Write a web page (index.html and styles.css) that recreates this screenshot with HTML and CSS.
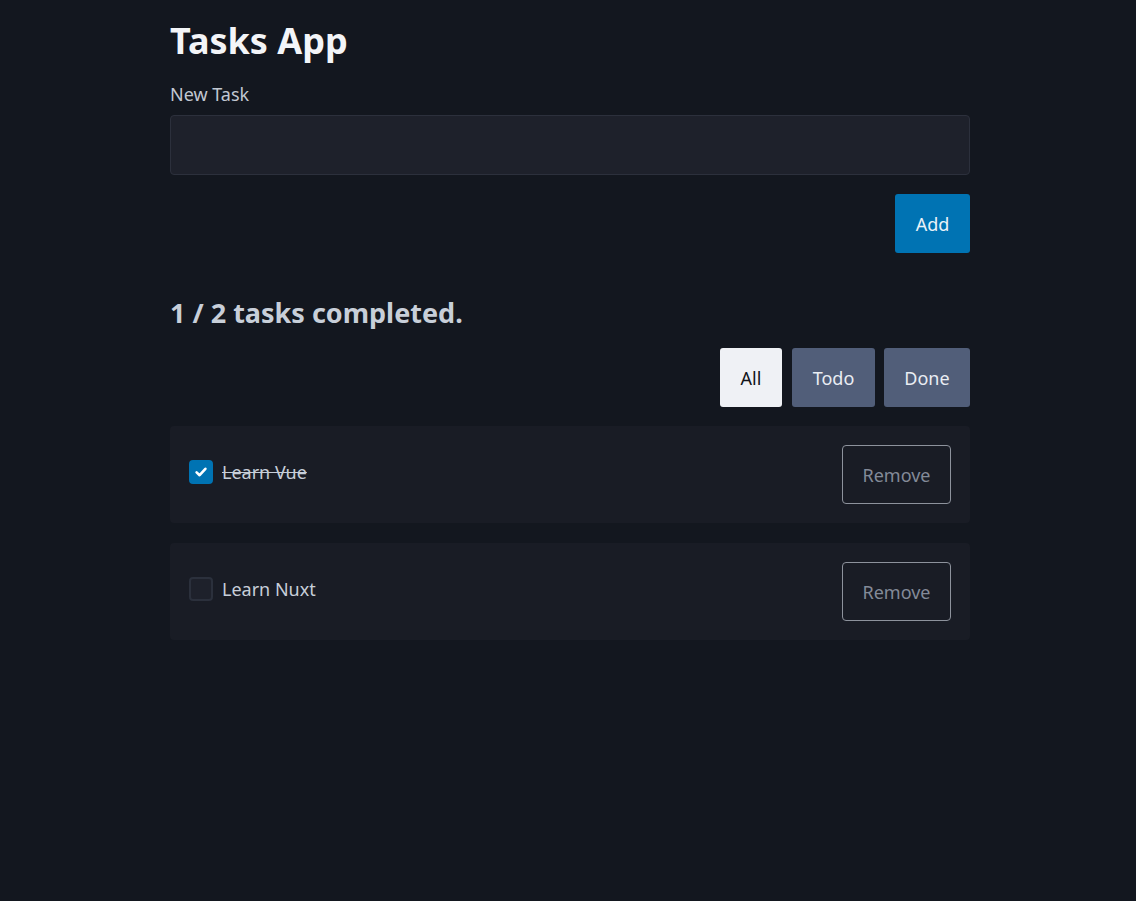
FILE: index.html
```html
<!DOCTYPE html>
<html lang="en">
<head>
<meta charset="utf-8">
<title>Tasks App</title>
<link rel="stylesheet" href="styles.css">
</head>
<body>
<main class="container">
  <h1 class="title">Tasks App</h1>
  <form class="new-task">
    <label class="label" for="task">New Task</label>
    <input class="input" id="task" type="text">
    <div class="actions">
      <button type="button" class="btn btn-primary">Add</button>
    </div>
  </form>
  <h2 class="summary">1 / 2 tasks completed.</h2>
  <div class="filters">
    <button type="button" class="btn btn-light">All</button>
    <button type="button" class="btn btn-muted">Todo</button>
    <button type="button" class="btn btn-muted">Done</button>
  </div>
  <ul class="tasks">
    <li class="task">
      <label class="task-label">
        <span class="check checked">
          <svg width="16" height="16" viewBox="0 0 16 16"><path d="M3.6 8.4 L6.6 11.2 L12.4 4.8" fill="none" stroke="#fff" stroke-width="2.6" stroke-linecap="round" stroke-linejoin="round"/></svg>
        </span>
        <span class="task-text done">Learn Vue</span>
      </label>
      <button type="button" class="btn btn-outline">Remove</button>
    </li>
    <li class="task">
      <label class="task-label">
        <span class="check"></span>
        <span class="task-text">Learn Nuxt</span>
      </label>
      <button type="button" class="btn btn-outline">Remove</button>
    </li>
  </ul>
</main>
</body>
</html>
```
FILE: styles.css
```css
* { box-sizing: border-box; }
html, body { margin: 0; padding: 0; }
body {
  background: #13171f;
  color: #d8dee9;
  font-family: "Noto Sans", "Open Sans", sans-serif;
  padding-left: 4px;
}
.container {
  width: 800px;
  margin: 0 auto;
  padding-top: 14px;
}
.title {
  margin: 0;
  font-size: 36px;
  line-height: 54px;
  font-weight: 700;
  color: #f3f5f8;
}
.new-task {
  display: flex;
  flex-direction: column;
  margin-top: 14px;
}
.label {
  font-size: 18px;
  line-height: 24px;
  color: #c2c8d2;
  margin-bottom: 9px;
}
.input {
  height: 60px;
  background: #1e212b;
  border: 1px solid #2c303c;
  border-radius: 4px;
  color: #e5e9f0;
  font: inherit;
  padding: 0 16px;
}
.actions {
  display: flex;
  justify-content: flex-end;
  margin-top: 19px;
}
.btn {
  font-family: inherit;
  font-size: 18px;
  height: 59px;
  padding: 0 20px;
  border: none;
  border-radius: 3px;
  cursor: pointer;
}
.btn-primary { background: #0073b3; color: #eaf2f8; width: 75px; }
.summary {
  margin: 42px 0 0;
  font-size: 27px;
  line-height: 36px;
  font-weight: 700;
  color: #c8cfd9;
}
.filters {
  display: flex;
  justify-content: flex-end;
  gap: 9px;
  margin-top: 17px;
}
.btn-light { background: #eff1f5; color: #11141a; width: 62px; padding: 0; }
.btn-muted { background: #515e79; color: #e9edf3; padding: 0; }
.filters .btn-muted:nth-child(2) { width: 83px; margin-left: 1px; }
.filters .btn-muted:nth-child(3) { width: 86px; }
.tasks {
  list-style: none;
  margin: 19px 0 0;
  padding: 0;
  display: flex;
  flex-direction: column;
  gap: 20px;
}
.task {
  background: #191c25;
  border-radius: 4px;
  height: 97px;
  padding: 0 19px;
  display: flex;
  align-items: center;
  justify-content: space-between;
}
.task-label {
  display: flex;
  align-items: center;
  gap: 9px;
  margin-top: -5px;
}
.check {
  width: 24px;
  height: 24px;
  border-radius: 4px;
  border: 2px solid #2b303c;
  background: #1e212b;
  display: flex;
  align-items: center;
  justify-content: center;
}
.check.checked { background: #0073b3; border-color: #0073b3; }
.task-text {
  font-size: 18px;
  color: #c7ced9;
}
.task-text.done { text-decoration: line-through; }
.btn-outline {
  background: transparent;
  border: 1px solid #8d929c;
  border-radius: 4px;
  color: #838a98;
  width: 109px;
  padding: 0;
}
```
